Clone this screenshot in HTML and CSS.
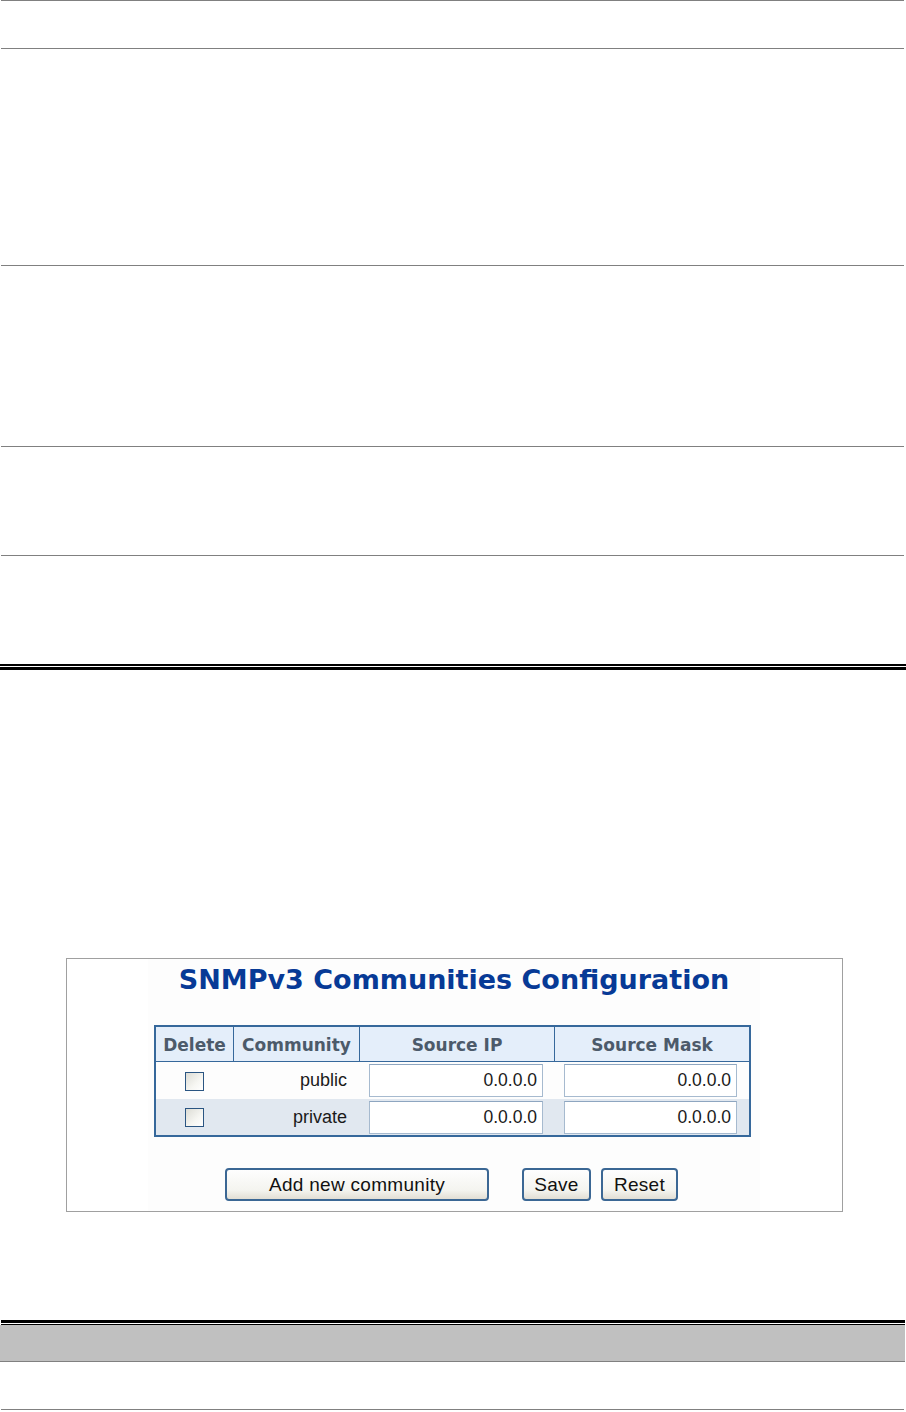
FILE: index.html
```html
<html>
<head>
    <link rel="stylesheet" href="styles.css">
</head>

<body>
    <div class="sheet">
        <div class="rows">
            <div class="row r1"></div>
            <div class="row r2"></div>
            <div class="row r3"></div>
            <div class="row r4"></div>
            <div class="row r5 last"></div>
        </div>
        <div class="double-top"><div class="thin"></div><div class="thick"></div></div>

        <div class="shot">
            <form class="panel" id="snmp_comm">
                <h1>SNMPv3 Communities Configuration</h1>
                <table class="comm">
                    <thead>
                        <tr>
                            <th class="c-del">Delete</th>
                            <th class="c-name">Community</th>
                            <th class="c-ip">Source IP</th>
                            <th class="c-mask">Source Mask</th>
                        </tr>
                    </thead>
                    <tbody>
                        <tr>
                            <td class="c-del"><input type="checkbox" name="del_1"></td>
                            <td class="c-name">public</td>
                            <td class="c-ip"><input type="text" name="ip_1" value="0.0.0.0"></td>
                            <td class="c-mask"><input type="text" name="mask_1" value="0.0.0.0"></td>
                        </tr>
                        <tr class="alt">
                            <td class="c-del"><input type="checkbox" name="del_2"></td>
                            <td class="c-name">private</td>
                            <td class="c-ip"><input type="text" name="ip_2" value="0.0.0.0"></td>
                            <td class="c-mask"><input type="text" name="mask_2" value="0.0.0.0"></td>
                        </tr>
                    </tbody>
                </table>
                <div class="buttons">
                    <input class="btn wide" type="button" value="Add new community">
                    <input class="btn save" type="submit" value="Save">
                    <input class="btn reset" type="reset" value="Reset">
                </div>
            </form>
        </div>

        <div class="double-bottom"><div class="thick"></div><div class="thin"></div></div>
        <div class="band"></div>
        <div class="row r6"></div>
    </div>
</body>
</html>
```

FILE: styles.css
```css
body{
    margin: 0;
    padding: 0;
    background: #fff;
    font-family: "Liberation Sans", Arial, sans-serif;
}
.sheet{
    width: 906px;
}
.rows{
    margin: 0 2px 0 1px;
    border-top: 1px solid #808080;
}
.row{
    border-bottom: 1px solid #808080;
}
.row.last{
    border-bottom: none;
}
.r1{ height: 47px; }
.r2{ height: 216px; }
.r3{ height: 180px; }
.r4{ height: 108px; }
.r5{ height: 108px; }
.r6{
    height: 47px;
    margin: 0 2px 0 1px;
}

.double-top .thin{
    height: 2px;
    background: #000;
    margin-bottom: 1px;
}
.double-top .thick{
    height: 3px;
    background: #000;
}
.double-bottom{
    margin: 0 1px;
}
.double-bottom .thick{
    height: 3px;
    background: #000;
    margin-bottom: 1px;
}
.double-bottom .thin{
    height: 1px;
    background: #000;
}
.band{
    height: 36px;
    background: #c0c0c0;
    border-bottom: 1px solid #808080;
    margin-right: 1px;
}

/* screenshot frame */
.shot{
    margin: 288px 0 108px 66px;
    width: 777px;
    height: 254px;
    box-sizing: border-box;
    border: 1px solid #a0a0a0;
    padding: 0 82px 0 81px;
}
.panel{
    height: 252px;
    margin: 0;
    padding: 6px 0 0;
    box-sizing: border-box;
    background: #fdfdfd;
}
.panel h1{
    margin: 0 0 30px;
    font-family: "DejaVu Sans", Verdana, sans-serif;
    font-weight: bold;
    font-size: 27px;
    line-height: 30px;
    color: #073a96;
    text-align: center;
}

.comm{
    width: 597px;
    margin: 0 0 0 6px;
    table-layout: fixed;
    border-collapse: separate;
    border-spacing: 0;
    border: 2px solid #36689b;
}
.comm th{
    box-sizing: border-box;
    height: 35px;
    padding: 2px 0 0;
    background: #e4eefa;
    border-bottom: 1px solid #36689b;
    border-right: 1px solid #36689b;
    font-family: "DejaVu Sans", Verdana, sans-serif;
    font-weight: bold;
    font-size: 17px;
    color: #4c5a6a;
    text-align: center;
}
.comm th.c-mask{
    border-right: none;
}
.comm th.c-del{ width: 78px; }
.comm th.c-name{ width: 126px; }
.comm th.c-ip{ width: 195px; }

.comm td{
    box-sizing: border-box;
    height: 37px;
    padding: 0;
    font-size: 18px;
    color: #1a1a1a;
}
.comm tr.alt td{
    height: 36px;
    background: #e1e8f0;
}
.comm td.c-del{
    text-align: center;
}
.comm td.c-name{
    text-align: right;
    padding-right: 13px;
}
.comm td.c-ip,
.comm td.c-mask{
    padding: 0 12px 0 9px;
}

.comm input[type=checkbox]{
    -webkit-appearance: none;
    appearance: none;
    display: inline-block;
    width: 19px;
    height: 19px;
    margin: 1px 2px 0 0;
    border: 1px solid #2a5582;
    background: linear-gradient(135deg, #dcdcd5, #f6f6f2 60%, #fff);
    vertical-align: middle;
}
.comm input[type=text]{
    display: block;
    width: 100%;
    height: 33px;
    box-sizing: border-box;
    margin: 0;
    padding: 0 5px 0 0;
    border: 1px solid #a6bacf;
    border-top-color: #8ea6c0;
    background: #fff;
    font-family: "Liberation Sans", Arial, sans-serif;
    font-size: 17.5px;
    color: #1a1a1a;
    text-align: right;
    outline: none;
}

.buttons{
    margin-top: 31px;
    display: flex;
    justify-content: center;
    gap: 10px;
    padding-right: 5px;
}
.btn{
    height: 33px;
    padding: 0;
    box-sizing: border-box;
    border: 2px solid #3b6794;
    border-radius: 4px;
    background: linear-gradient(#fefefe, #f4f4ef 70%, #e2ded4);
    font-family: "Liberation Sans", Arial, sans-serif;
    font-size: 19px;
    letter-spacing: 0.3px;
    color: #111;
    cursor: pointer;
}
.btn.wide{
    width: 264px;
    margin-right: 23px;
}
.btn.save{
    width: 69px;
}
.btn.reset{
    width: 77px;
}
```
